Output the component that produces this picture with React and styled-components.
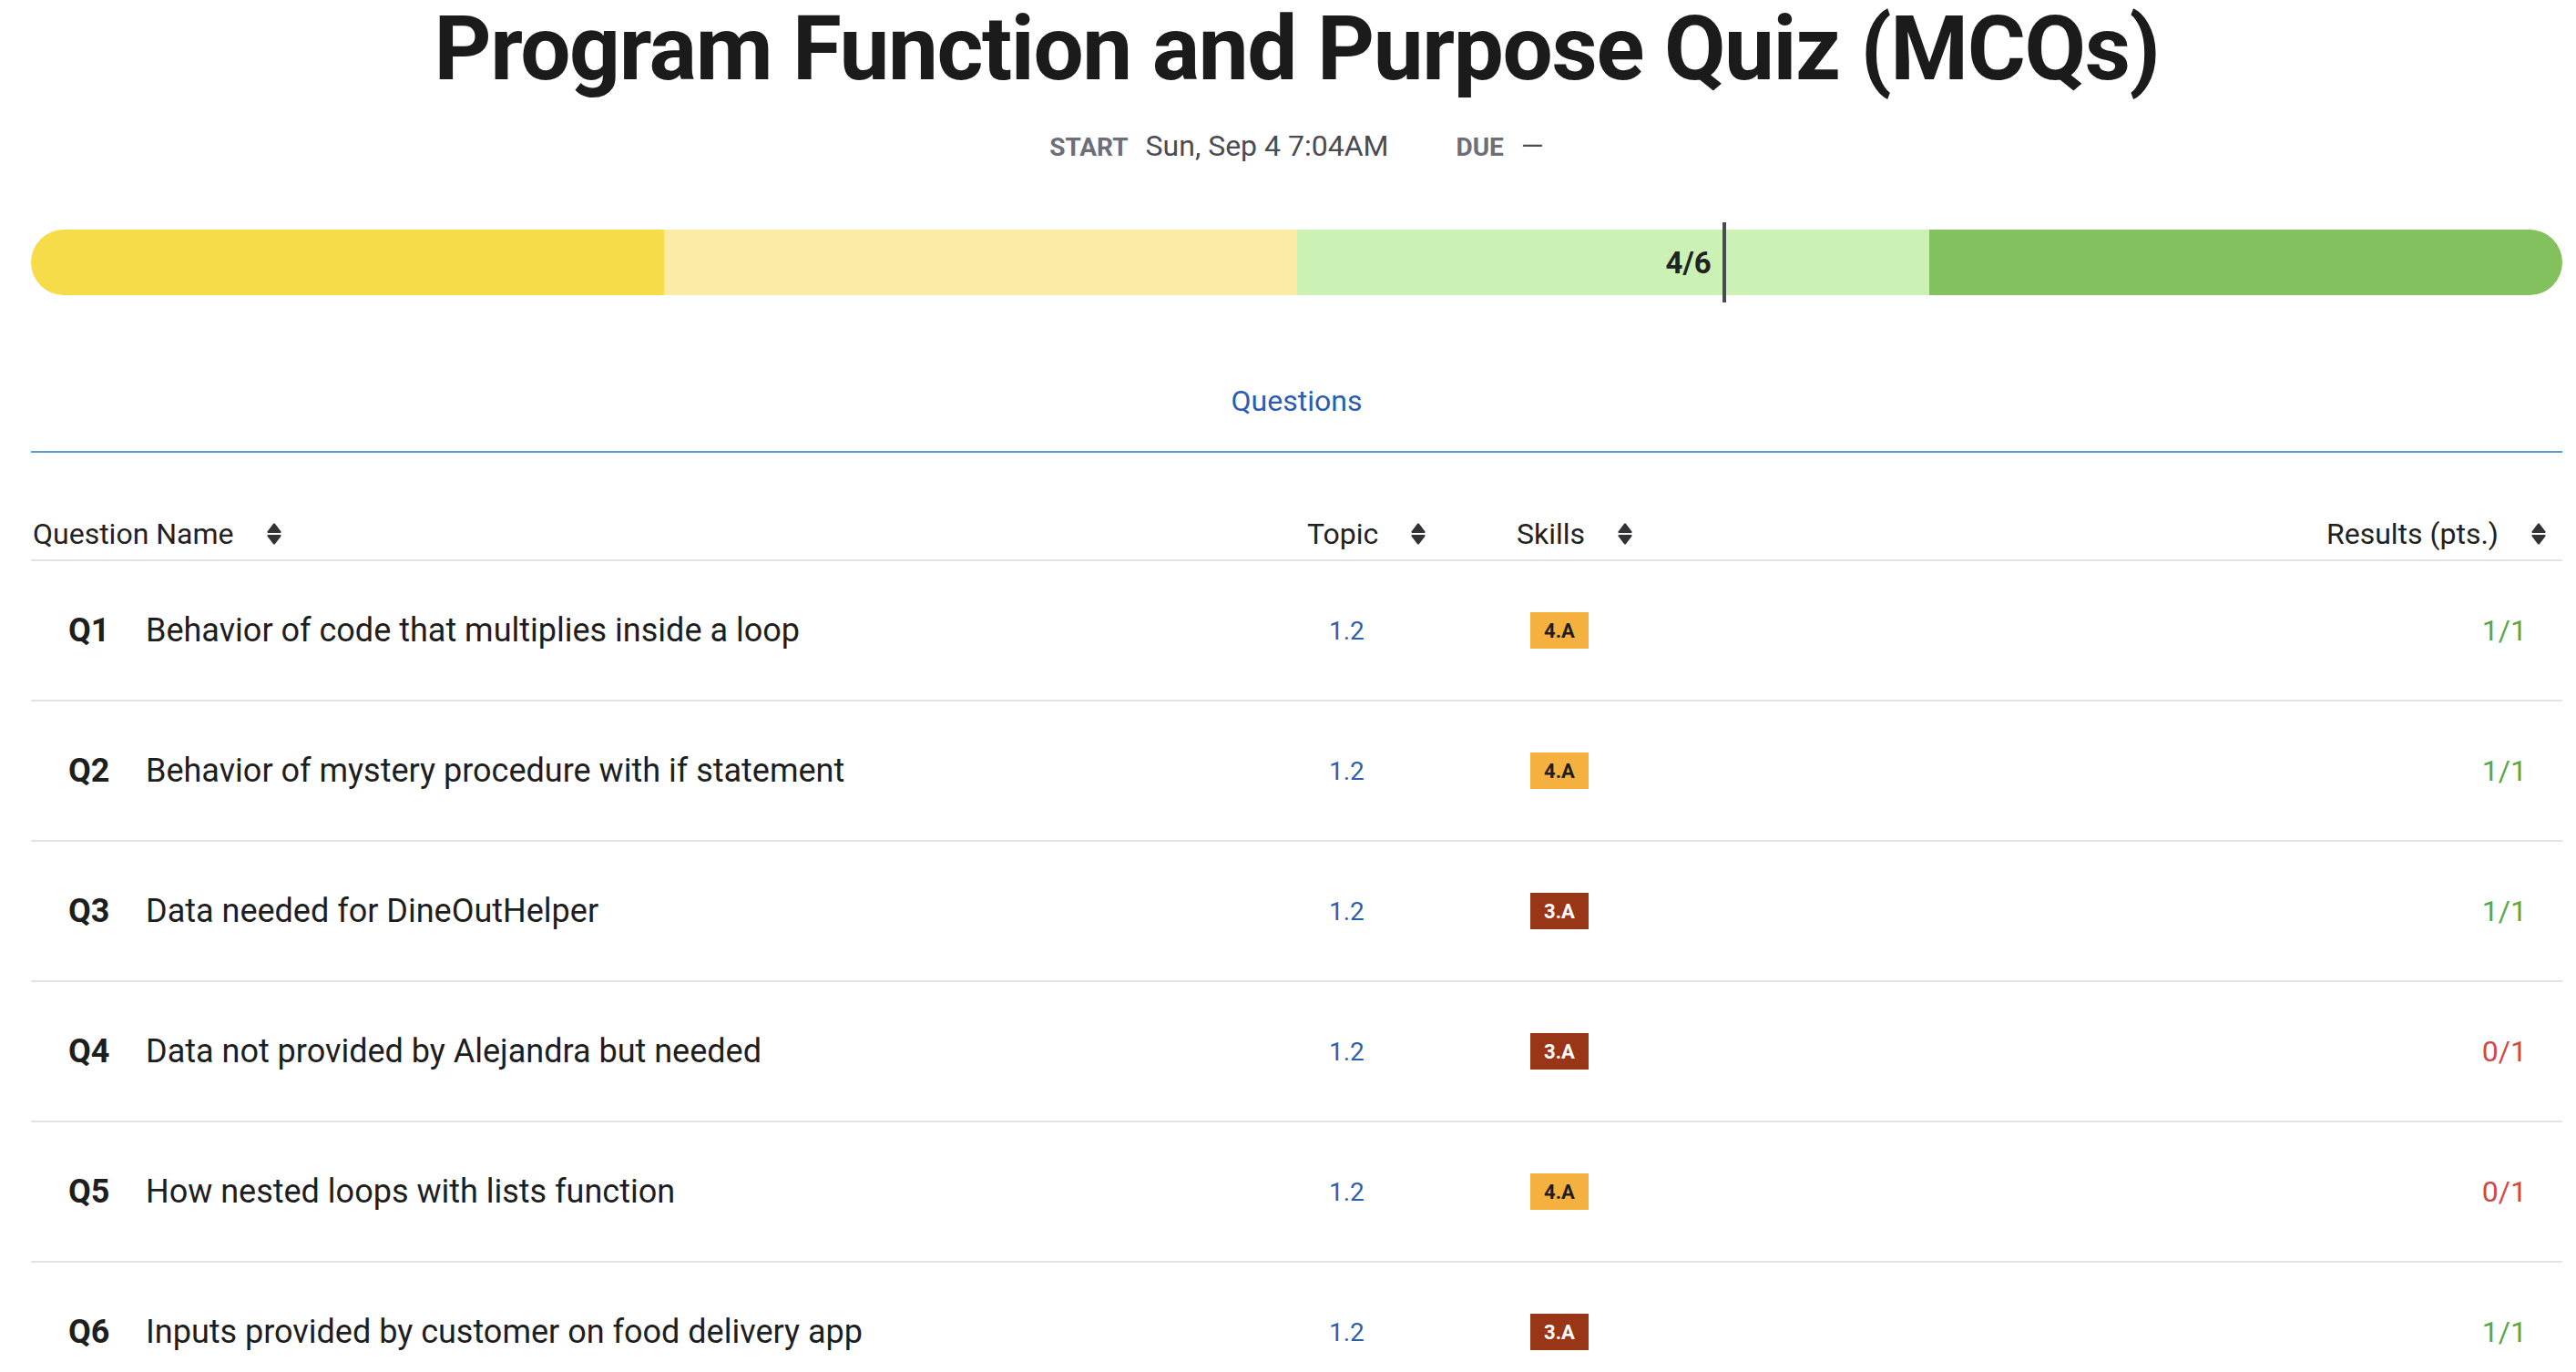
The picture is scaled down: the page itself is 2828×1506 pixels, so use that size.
import React from "react";
import styled, { createGlobalStyle } from "styled-components";

const GlobalStyle = createGlobalStyle`
	html, body {
		margin: 0;
		padding: 0;
		background: #ffffff;
	}
	body {
		font-family: Roboto, "Liberation Sans", Arial, sans-serif;
		color: #1e1e1e;
	}
`;

const Page = styled.main`
	padding: 0 15px 0 34px;
`;

const Title = styled.h1`
	margin: 0;
	font-size: 98px;
	line-height: 108px;
	font-weight: 700;
	color: #1b1b1b;
	text-align: center;
	letter-spacing: -1.4px;
`;

const Meta = styled.div`
	display: flex;
	justify-content: center;
	align-items: baseline;
	margin-top: 32px;
	line-height: 40px;
`;

const MetaLabel = styled.span`
	font-size: 28px;
	font-weight: 700;
	color: #6e6e78;
	margin-right: 19px;
	margin-left: ${p => (p.$spaced ? "74px" : "0")};
`;

const MetaValue = styled.span`
	font-size: 32px;
	color: #4b4b55;
`;

const Bar = styled.div`
	position: relative;
	margin-top: 70px;
`;

const Track = styled.div`
	display: flex;
	height: 72px;
	border-radius: 36px;
	overflow: hidden;
`;

const Segment = styled.div`
	flex: 1;
	background: ${p => p.$color};
`;

const Marker = styled.div`
	position: absolute;
	top: -8px;
	bottom: -8px;
	width: 4px;
	background: #4a4a52;
`;

const MarkerLabel = styled.span`
	position: absolute;
	right: calc(100% + 12px);
	top: 50%;
	transform: translateY(-50%);
	font-size: 33px;
	font-weight: 700;
	color: #222222;
	white-space: nowrap;
`;

const Tabs = styled.nav`
	display: flex;
	justify-content: center;
	padding: 96px 0 35px;
	border-bottom: 2px solid #5b9bd5;
`;

const Tab = styled.span`
	font-size: 32px;
	line-height: 40px;
	color: #2a5db0;
`;

const Table = styled.div`
	display: flex;
	flex-direction: column;
`;

const Row = styled.div`
	display: grid;
	grid-template-columns: 1401px 230px 230px 1fr;
	align-items: ${p => (p.$head ? "end" : "center")};
	height: ${p => (p.$head ? "109px" : "152px")};
	padding-bottom: ${p => (p.$head ? "8px" : "0")};
	border-bottom: 2px solid #e3e3e6;
	box-sizing: content-box;
`;

const HeadCell = styled.div`
	display: flex;
	align-items: center;
	justify-content: ${p => (p.$right ? "flex-end" : "flex-start")};
	gap: 36px;
	font-size: 32px;
	line-height: 40px;
	color: #222222;
	padding-left: ${p => p.$pl || "0"};
	padding-right: ${p => p.$pr || "0"};
`;

const NameCell = styled.div`
	display: flex;
	align-items: center;
	padding-left: 41px;
	font-size: 36px;
	color: #1e1e1e;
`;

const QLabel = styled.span`
	width: 85px;
	font-weight: 700;
`;

const TopicCell = styled.div`
	padding-left: 24px;
	font-size: 28px;
	color: #2b5fae;
`;

const SkillCell = styled.div`
	padding-left: 15px;
`;

const Badge = styled.span`
	display: inline-flex;
	align-items: center;
	justify-content: center;
	width: 64px;
	height: 40px;
	font-size: 22px;
	font-weight: 700;
	background: ${p => (p.$dark ? "#9a3618" : "#f4b13f")};
	color: ${p => (p.$dark ? "#ffffff" : "#1e1e1e")};
`;

const ResultCell = styled.div`
	text-align: right;
	padding-right: 39px;
	font-size: 32px;
	color: ${p => (p.$ok ? "#5aa64a" : "#d04848")};
`;

const SortIcon = () => (
	<svg width="16" height="24" viewBox="0 0 16 24" fill="#333336">
		<path
			d="M8 1.5 L14.5 10 H1.5 Z"
			stroke="#333336"
			strokeWidth="2.2"
			strokeLinejoin="round"
		/>
		<path
			d="M1.5 14 H14.5 L8 22.5 Z"
			stroke="#333336"
			strokeWidth="2.2"
			strokeLinejoin="round"
		/>
	</svg>
);

const questions = [
	{ id: "Q1", name: "Behavior of code that multiplies inside a loop", topic: "1.2", skill: "4.A", score: "1/1" },
	{ id: "Q2", name: "Behavior of mystery procedure with if statement", topic: "1.2", skill: "4.A", score: "1/1" },
	{ id: "Q3", name: "Data needed for DineOutHelper", topic: "1.2", skill: "3.A", score: "1/1" },
	{ id: "Q4", name: "Data not provided by Alejandra but needed", topic: "1.2", skill: "3.A", score: "0/1" },
	{ id: "Q5", name: "How nested loops with lists function", topic: "1.2", skill: "4.A", score: "0/1" },
	{ id: "Q6", name: "Inputs provided by customer on food delivery app", topic: "1.2", skill: "3.A", score: "1/1" }
];

const segments = ["#f7dc4a", "#fbeba7", "#cbf2b4", "#82c15d"];

const Progress = ({ done, total }) => (
	<Bar>
		<Track>
			{segments.map(c => (
				<Segment key={c} $color={c} />
			))}
		</Track>
		<Marker style={{ left: `calc(${(done / total) * 100}% + 4px)` }}>
			<MarkerLabel>
				{done}/{total}
			</MarkerLabel>
		</Marker>
	</Bar>
);

const App = () => {
	return (
		<Page>
			<GlobalStyle />
			<Title>Program Function and Purpose Quiz (MCQs)</Title>
			<Meta>
				<MetaLabel>START</MetaLabel>
				<MetaValue>Sun, Sep 4 7:04AM</MetaValue>
				<MetaLabel $spaced>DUE</MetaLabel>
				<MetaValue>—</MetaValue>
			</Meta>

			<Progress done={4} total={6} />

			<Tabs>
				<Tab>Questions</Tab>
			</Tabs>

			<Table>
				<Row $head>
					<HeadCell $pl="2px">
						Question Name <SortIcon />
					</HeadCell>
					<HeadCell>
						Topic <SortIcon />
					</HeadCell>
					<HeadCell>
						Skills <SortIcon />
					</HeadCell>
					<HeadCell $right $pr="18px">
						Results (pts.) <SortIcon />
					</HeadCell>
				</Row>
				{questions.map(q => (
					<Row key={q.id}>
						<NameCell>
							<QLabel>{q.id}</QLabel>
							{q.name}
						</NameCell>
						<TopicCell>{q.topic}</TopicCell>
						<SkillCell>
							<Badge $dark={q.skill === "3.A"}>{q.skill}</Badge>
						</SkillCell>
						<ResultCell $ok={q.score === "1/1"}>{q.score}</ResultCell>
					</Row>
				))}
			</Table>
		</Page>
	);
};

export default App;
